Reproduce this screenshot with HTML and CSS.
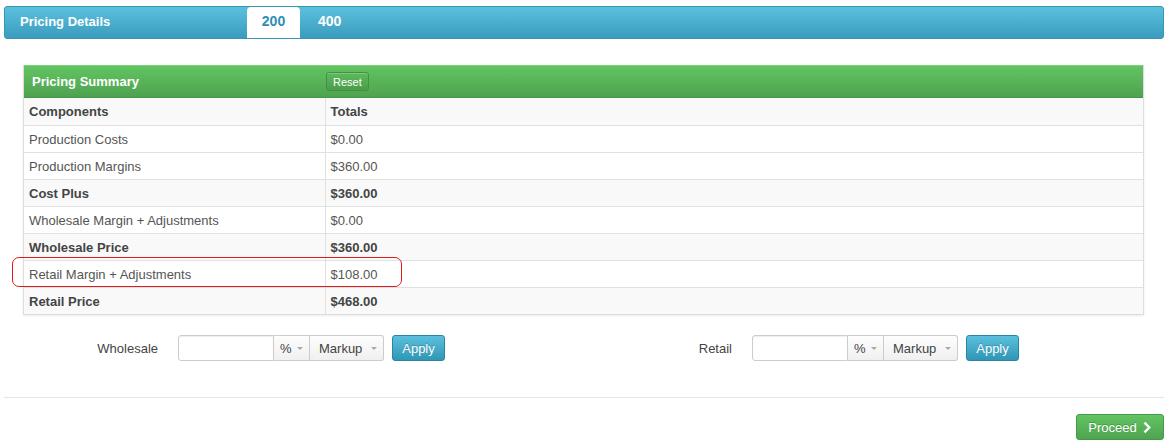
FILE: index.html
```html
<!DOCTYPE html>
<html lang="en">
<head>
    <meta charset="UTF-8">
    <title>Pricing Details</title>
    <link rel="stylesheet" href="styles.css">
</head>
<body>

<div class="page">

    <!-- Barra superior con pestañas -->
    <div class="topbar">
        <div class="topbar-title">Pricing Details</div>
        <div class="tabs">
            <div class="tab active">200</div>
            <div class="tab">400</div>
        </div>
    </div>

    <div class="panel">
        <div class="panel-head">
            <div class="panel-title">Pricing Summary</div>
            <button class="btn-reset">Reset</button>
        </div>

        <table class="summary">
            <tr class="strong">
                <td class="col-name">Components</td>
                <td>Totals</td>
            </tr>
            <tr>
                <td class="col-name">Production Costs</td>
                <td>$0.00</td>
            </tr>
            <tr>
                <td class="col-name">Production Margins</td>
                <td>$360.00</td>
            </tr>
            <tr class="strong">
                <td class="col-name">Cost Plus</td>
                <td>$360.00</td>
            </tr>
            <tr>
                <td class="col-name">Wholesale Margin + Adjustments</td>
                <td>$0.00</td>
            </tr>
            <tr class="strong">
                <td class="col-name">Wholesale Price</td>
                <td>$360.00</td>
            </tr>
            <tr>
                <td class="col-name">Retail Margin + Adjustments</td>
                <td>$108.00</td>
            </tr>
            <tr class="strong">
                <td class="col-name">Retail Price</td>
                <td>$468.00</td>
            </tr>
        </table>

        <!-- Marca roja sobre la fila de margen retail -->
        <div class="highlight"></div>
    </div>

    <div class="adjust">
        <div class="adjust-group">
            <label class="adjust-label">Wholesale</label>
            <input class="adjust-input" type="text">
            <div class="select select-unit">% <span class="caret"></span></div>
            <div class="select select-mode">Markup <span class="caret"></span></div>
            <button class="btn-apply">Apply</button>
        </div>
        <div class="adjust-group">
            <label class="adjust-label">Retail</label>
            <input class="adjust-input" type="text">
            <div class="select select-unit">% <span class="caret"></span></div>
            <div class="select select-mode">Markup <span class="caret"></span></div>
            <button class="btn-apply">Apply</button>
        </div>
    </div>

    <div class="actions">
        <button class="btn-proceed">Proceed
            <svg class="chevron" viewBox="0 0 10 12" width="9" height="11">
                <path d="M2.5 1.5 L7 6 L2.5 10.5" fill="none" stroke="#fff" stroke-width="2.6" stroke-linecap="square"/>
            </svg>
        </button>
    </div>

</div>

</body>
</html>
```

FILE: styles.css
```css
body {
    margin: 0;
    padding: 0;
    font-family: "Liberation Sans", Arial, sans-serif;
    font-size: 13px;
    color: #555;
    background: #fff;
}

.page {
    padding: 6px 4px 0 4px;
}

/* Barra superior */
.topbar {
    height: 33px;
    display: flex;
    align-items: stretch;
    background: linear-gradient(to bottom, #5bc0de, #3a9cbe);
    border: 1px solid #3a94b4;
    border-radius: 3px;
    box-sizing: border-box;
}

.topbar-title {
    width: 227px;
    padding-left: 15px;
    color: #fff;
    font-weight: bold;
    font-size: 13px;
    line-height: 30px;
}

.tabs {
    display: flex;
    align-items: flex-end;
}

.tab {
    height: 31px;
    line-height: 29px;
    padding: 0 14px 0 14px;
    font-weight: bold;
    font-size: 14px;
    color: #fff;
}

.tab.active {
    width: 53px;
    box-sizing: border-box;
    padding: 0;
    text-align: center;
    background: #fff;
    color: #2d8fb5;
    border-radius: 4px 4px 0 0;
    margin-right: 4px;
}

/* Panel de resumen */
.panel {
    position: relative;
    margin: 26px 20px 0 19px;
    border: 1px solid #ddd;
    border-top: none;
    box-shadow: 0 1px 2px rgba(0, 0, 0, 0.08);
}

.panel-head {
    height: 33px;
    display: flex;
    align-items: center;
    background: linear-gradient(to bottom, #62c462, #4fa24f);
    border-top: 1px solid #7cd07c;
    border-bottom: 1px solid #46944a;
    box-sizing: border-box;
}

.panel-title {
    width: 294px;
    padding-left: 8px;
    color: #fff;
    font-weight: bold;
    font-size: 13px;
}

.btn-reset {
    height: 19px;
    padding: 0 6px;
    font-family: "Liberation Sans", Arial, sans-serif;
    font-size: 11px;
    color: #fff;
    background: linear-gradient(to bottom, #5db95d, #4a9d4a);
    border: 1px solid #44913f;
    border-radius: 3px;
    box-shadow: inset 0 1px 0 rgba(255, 255, 255, 0.2);
}

.summary {
    width: 100%;
    border-collapse: collapse;
}

.summary td {
    height: 27px;
    padding: 1px 5px 0 5px;
    border-bottom: 1px solid #e1e1e1;
    box-sizing: border-box;
}

.summary tr:last-child td {
    border-bottom: none;
}

.summary td.col-name {
    width: 301px;
    border-right: 1px solid #e1e1e1;
}

.summary tr.strong td {
    background: #f9f9f9;
    font-weight: bold;
    color: #444;
}

.highlight {
    position: absolute;
    left: -12px;
    top: 192px;
    width: 390px;
    height: 30px;
    border: 1.5px solid #e0191f;
    border-radius: 7px;
    box-sizing: border-box;
    pointer-events: none;
}

/* Formulario de ajustes */
.adjust {
    display: grid;
    grid-template-columns: 574px 1fr;
    margin: 20px 0 0 19px;
}

.adjust-group {
    display: flex;
    align-items: center;
    height: 26px;
}

.adjust-label {
    width: 135px;
    margin-right: 20px;
    text-align: right;
    color: #444;
}

.adjust-input {
    width: 96px;
    height: 26px;
    box-sizing: border-box;
    border: 1px solid #ccc;
    border-radius: 3px 0 0 3px;
    margin: 0;
    box-shadow: inset 0 1px 1px rgba(0, 0, 0, 0.07);
}

.select {
    height: 26px;
    box-sizing: border-box;
    border: 1px solid #ccc;
    border-left: none;
    background: linear-gradient(to bottom, #fdfdfd, #f0f0f0);
    display: flex;
    align-items: center;
    justify-content: space-between;
    padding: 0 6px 0 6px;
    color: #444;
}

.select-unit {
    width: 36px;
}

.select-mode {
    width: 74px;
    padding-left: 9px;
    border-radius: 0 3px 3px 0;
}

.caret {
    width: 0;
    height: 0;
    border-left: 3px solid transparent;
    border-right: 3px solid transparent;
    border-top: 3px solid #aaa;
}

.btn-apply {
    margin-left: 8px;
    width: 53px;
    height: 26px;
    font-family: "Liberation Sans", Arial, sans-serif;
    font-size: 13px;
    color: #fff;
    background: linear-gradient(to bottom, #5bc0de, #2f96b4);
    border: 1px solid #2a85a0;
    border-radius: 3px;
    text-shadow: 0 -1px 0 rgba(0, 0, 0, 0.2);
}

/* Acciones */
.actions {
    margin-top: 36px;
    border-top: 1px solid #e5e5e5;
    padding-top: 16px;
    display: flex;
    justify-content: flex-end;
}

.btn-proceed {
    width: 88px;
    height: 26px;
    display: flex;
    align-items: center;
    justify-content: center;
    gap: 6px;
    font-family: "Liberation Sans", Arial, sans-serif;
    font-size: 13px;
    color: #fff;
    background: linear-gradient(to bottom, #62c462, #4fa34f);
    border: 1px solid #469a46;
    border-radius: 3px;
    text-shadow: 0 -1px 0 rgba(0, 0, 0, 0.2);
}

.chevron {
    display: block;
}
```
